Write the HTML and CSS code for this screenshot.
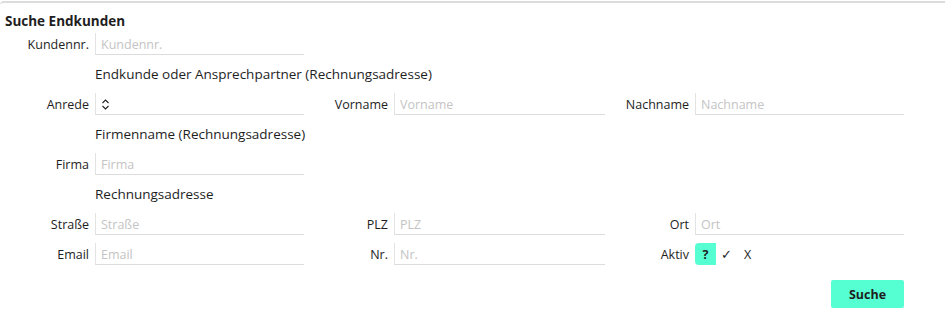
FILE: index.html
```html
<!DOCTYPE html>
<html>
<head>
  <title>Suche Endkunden</title>
  <meta charset="UTF-8" />
  <link rel="stylesheet" href="styles.css">
</head>
<body>
  <div class="panel">
    <h1>Suche Endkunden</h1>

    <form class="search-form">
      <label class="lbl">Kundennr.</label>
      <input class="field" placeholder="Kundennr.">
      <div class="span-rest"></div>

      <div class="section">Endkunde oder Ansprechpartner (Rechnungsadresse)</div>

      <label class="lbl">Anrede</label>
      <div class="field select">
        <svg width="9" height="11" viewBox="0 0 9 11"><path d="M1.5 4 L4.5 1 L7.5 4 M1.5 7 L4.5 10 L7.5 7" fill="none" stroke="#222" stroke-width="1.1"/></svg>
      </div>
      <label class="lbl">Vorname</label>
      <input class="field" placeholder="Vorname">
      <label class="lbl">Nachname</label>
      <input class="field" placeholder="Nachname">

      <div class="section">Firmenname (Rechnungsadresse)</div>

      <label class="lbl">Firma</label>
      <input class="field" placeholder="Firma">
      <div class="span-rest"></div>

      <div class="section">Rechnungsadresse</div>

      <label class="lbl">Straße</label>
      <input class="field" placeholder="Straße">
      <label class="lbl">PLZ</label>
      <input class="field" placeholder="PLZ">
      <label class="lbl">Ort</label>
      <input class="field" placeholder="Ort">

      <label class="lbl">Email</label>
      <input class="field" placeholder="Email">
      <label class="lbl">Nr.</label>
      <input class="field" placeholder="Nr.">
      <label class="lbl">Aktiv</label>
      <div class="toggle">
        <span class="opt active">?</span>
        <span class="opt check">✓</span>
        <span class="opt">X</span>
      </div>
    </form>

    <div class="actions">
      <button class="btn">Suche</button>
    </div>
  </div>
</body>
</html>
```

FILE: styles.css
```css
body {
  margin: 0;
  font-family: "Open Sans", "Noto Sans", sans-serif;
  color: #1e1e1e;
  background: #fff;
}
.panel {
  border-top: 2px solid #dcdcdc;
  border-top-left-radius: 4px;
  margin-top: 1px;
  width: 945px;
}
h1 {
  font-size: 13.5px;
  font-weight: bold;
  margin: 0;
  padding: 9px 0 0 5px;
  height: 21px;
}
.search-form {
  display: grid;
  grid-template-columns: 95px 209px 90px 211px 90px 209px;
  grid-auto-rows: 22px;
  row-gap: 8px;
}
.lbl {
  font-size: 12.5px;
  text-align: right;
  padding-right: 6px;
  line-height: 23px;
}
.field {
  font-family: inherit;
  font-size: 12.5px;
  color: #1e1e1e;
  border: none;
  border-left: 1px solid #e3e3e3;
  border-bottom: 1px solid #dcdcdc;
  padding: 1px 0 0 5px;
  margin: 0;
  height: 22px;
  box-sizing: border-box;
  outline: none;
  background: #fff;
}
.field::placeholder {
  color: #c4c4c4;
}
.select {
  display: flex;
  align-items: center;
}
.span-rest {
  grid-column: 3 / 7;
}
.section {
  grid-column: 2 / 7;
  font-size: 13.5px;
  line-height: 23px;
}
.toggle {
  display: flex;
  align-items: stretch;
  font-size: 12.5px;
}
.opt {
  width: 21px;
  text-align: center;
  line-height: 23px;
}
.opt.check {
  font-family: "DejaVu Sans", sans-serif;
  font-size: 13px;
}
.opt.active {
  background: #55ffd2;
  font-weight: bold;
  border-radius: 4px 0 0 4px;
}
.actions {
  display: flex;
  justify-content: flex-end;
  width: 904px;
  margin-top: 15px;
}
.btn {
  font-family: inherit;
  font-size: 12.5px;
  font-weight: bold;
  color: #1e1e1e;
  background: #55ffd2;
  border: none;
  border-radius: 2px;
  width: 73px;
  height: 28px;
}
```
